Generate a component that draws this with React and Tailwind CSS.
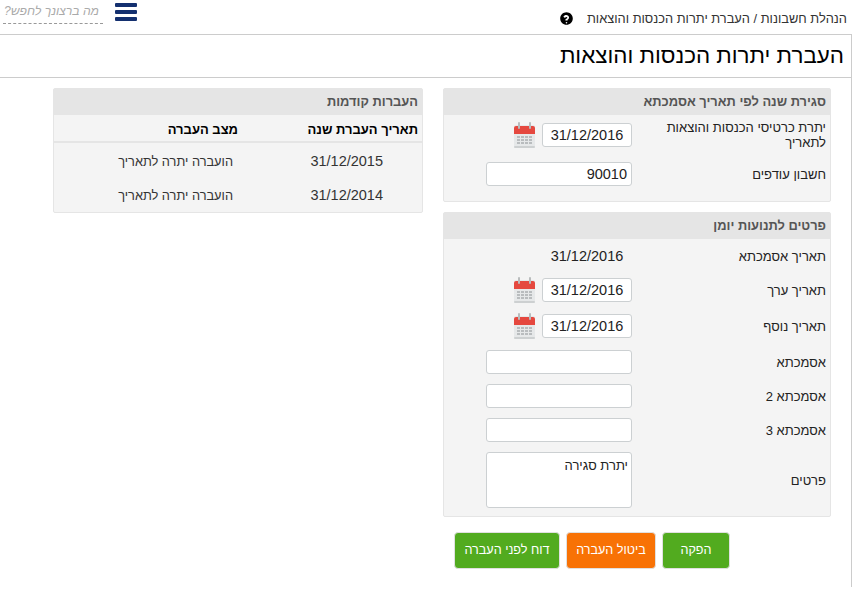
import React from "react";

const Calendar = () => (
  <svg width="21" height="26" viewBox="0 0 21 26" className="shrink-0 -my-[1px]">
    <rect x="0" y="3" width="21" height="23" rx="2" fill="#e6e8e9" />
    <rect x="0" y="24" width="21" height="2" rx="1" fill="#cdd0d1" />
    <path d="M0 6a2 2 0 0 1 2-2h17a2 2 0 0 1 2 2v6H0z" fill="#e5483f" />
    <rect x="4" y="0" width="2" height="7" rx="1" fill="#b9bcbd" />
    <rect x="15" y="0" width="2" height="7" rx="1" fill="#b9bcbd" />
    <g fill="#b9bcbe">
      <rect x="3" y="14" width="3" height="2" />
      <rect x="7" y="14" width="3" height="2" />
      <rect x="11" y="14" width="3" height="2" />
      <rect x="15" y="14" width="3" height="2" />
      <rect x="3" y="17" width="3" height="2" />
      <rect x="7" y="17" width="3" height="2" />
      <rect x="11" y="17" width="3" height="2" />
      <rect x="15" y="17" width="3" height="2" />
      <rect x="3" y="20" width="3" height="2" />
      <rect x="7" y="20" width="3" height="2" />
      <rect x="11" y="20" width="3" height="2" />
      <rect x="15" y="20" width="3" height="2" />
    </g>
  </svg>
);

const inputClass =
  "bg-white border border-[#ccd0d2] rounded-[3px] h-6 text-[14.5px] text-[#222] px-1 pt-[1px]";

// label on the right, control on the left of it
const FormRow = ({ label, children, className = "" }) => (
  <div className={`flex items-center ${className}`}>
    <div className="w-[194px] shrink-0 text-[13px] leading-[15px] text-[#222]">
      {label}
    </div>
    {children}
  </div>
);

const DateField = ({ value }) => (
  <div className="flex items-center gap-[7px]">
    <div className={`${inputClass} w-[90px] flex items-center justify-center`} dir="ltr">
      {value}
    </div>
    <Calendar />
  </div>
);

const TextField = ({ value }) => (
  <div className={`${inputClass} w-[146px] flex items-center justify-end`} dir="ltr">
    {value}
  </div>
);

const Panel = ({ title, children, className = "" }) => (
  <div className={`bg-[#f4f4f4] border border-[#e5e5e5] rounded-[2px] ${className}`}>
    <div className="h-[26px] bg-[#e5e5e5] flex items-center pr-[4px] text-[12.9px] font-bold text-[#555]">
      {title}
    </div>
    {children}
  </div>
);

const Btn = ({ className, children }) => (
  <button
    className={`h-[37px] rounded-[4px] border border-[#e0e0e0] text-white text-[12.6px] ${className}`}
  >
    {children}
  </button>
);

export default function App() {
  return (
    <div dir="rtl" className="w-[852px] h-[615px] bg-white overflow-hidden font-['Liberation_Sans',Arial,sans-serif]">
      <header className="h-[35px] border-b border-[#ccc] flex items-start justify-between">
        <div className="flex items-center gap-[14px] pt-[11px] pr-[5px] text-[12.85px] leading-[15px] text-[#333]">
          <span>הנהלת חשבונות / העברת יתרות הכנסות והוצאות</span>
          <svg width="13" height="13" viewBox="0 0 512 512" fill="#000">
            <path d="M256 8C119 8 8 119 8 256s111 248 248 248 248-111 248-248S393 8 256 8zm0 448c-18 0-32-14-32-32s14-32 32-32 32 14 32 32-14 32-32 32zm44-139v5c0 7-5 12-12 12h-64c-7 0-12-5-12-12v-8c0-36 27-50 48-62 18-10 29-17 29-30 0-18-22-29-40-29-23 0-34 11-49 30-4 5-12 6-17 2l-39-30c-5-4-6-11-3-16 25-37 57-58 107-58 52 0 108 41 108 95 0 71-56 72-56 101z" />
          </svg>
        </div>
        <div className="flex items-start gap-[12px] pl-[3px]">
          <div className="flex flex-col gap-[3px] pt-[3px] w-[22px]">
            <span className="h-[4px] bg-[#14306f] rounded-[1px]" />
            <span className="h-[4px] bg-[#14306f] rounded-[1px]" />
            <span className="h-[4px] bg-[#14306f] rounded-[1px]" />
          </div>
          <div className="w-[100px] h-[24px] border-b border-dashed border-[#999] text-[12.2px] italic text-[#aaa] leading-[22px] pr-[4px] whitespace-nowrap">
            מה ברצונך לחפש?
          </div>
        </div>
      </header>

      <div className="h-[43px] border-b border-r border-[#ccc] flex items-center pr-[7px] text-[22.4px] text-black">
        העברת יתרות הכנסות והוצאות
      </div>

      <main className="h-[509px] border-r border-[#ccc] pr-[20px] pt-[10px] flex items-start gap-[20px]">
        <div className="w-[388px] shrink-0">
          <Panel title="סגירת שנה לפי תאריך אסמכתא" className="h-[114px]">
            <div className="pr-[4px] pt-[5px]">
              <FormRow label={<span className="block w-[180px]">יתרת כרטיסי הכנסות והוצאות לתאריך</span>}>
                <DateField value="31/12/2016" />
              </FormRow>
              <FormRow label="חשבון עודפים" className="mt-[12px]">
                <TextField value="90010" />
              </FormRow>
            </div>
          </Panel>

          <Panel title="פרטים לתנועות יומן" className="h-[305px] mt-[10px]">
            <div className="pr-[4px] pt-[5px]">
              <FormRow label="תאריך אסמכתא" className="h-[24px]">
                <div className="w-[90px] text-center text-[14.5px] text-[#222] pt-[1px]" dir="ltr">31/12/2016</div>
              </FormRow>
              <FormRow label="תאריך ערך" className="mt-[10px]">
                <DateField value="31/12/2016" />
              </FormRow>
              <FormRow label="תאריך נוסף" className="mt-[12px]">
                <DateField value="31/12/2016" />
              </FormRow>
              <FormRow label="אסמכתא" className="mt-[12px]">
                <TextField value="" />
              </FormRow>
              <FormRow label="אסמכתא 2" className="mt-[10px]">
                <TextField value="" />
              </FormRow>
              <FormRow label="אסמכתא 3" className="mt-[10px]">
                <TextField value="" />
              </FormRow>
              <FormRow label="פרטים" className="mt-[10px]">
                <div className="w-[146px] h-[56px] bg-white border border-[#ccd0d2] rounded-[3px] text-[13px] text-[#222] px-[3px] pt-[3px]">
                  יתרת סגירה
                </div>
              </FormRow>
            </div>
          </Panel>

          <div className="flex gap-[6px] mt-[15px] pr-[101px]">
            <Btn className="w-[68px] bg-[#52ab1f]">הפקה</Btn>
            <Btn className="w-[90px] bg-[#f87205]">ביטול העברה</Btn>
            <Btn className="w-[106px] bg-[#52ab1f]">דוח לפני העברה</Btn>
          </div>
        </div>

        <Panel title="העברות קודמות" className="w-[370px] h-[125px]">
          <div className="h-[28px] flex items-center border-b-2 border-[#e5e5e5] text-[13px] font-bold text-black pr-[4px] pt-[3px] mb-[2px]">
            <div className="w-[180px]">תאריך העברת שנה</div>
            <div>מצב העברה</div>
          </div>
          {["31/12/2015", "31/12/2014"].map((d) => (
            <div key={d} className="h-[34px] flex items-center text-[12.8px] text-[#333] pr-[39px]">
              <div className="w-[150px] text-[14.5px]" dir="ltr"><span className="block text-right">{d}</span></div>
              <div>הועברה יתרה לתאריך</div>
            </div>
          ))}
        </Panel>
      </main>
    </div>
  );
}
